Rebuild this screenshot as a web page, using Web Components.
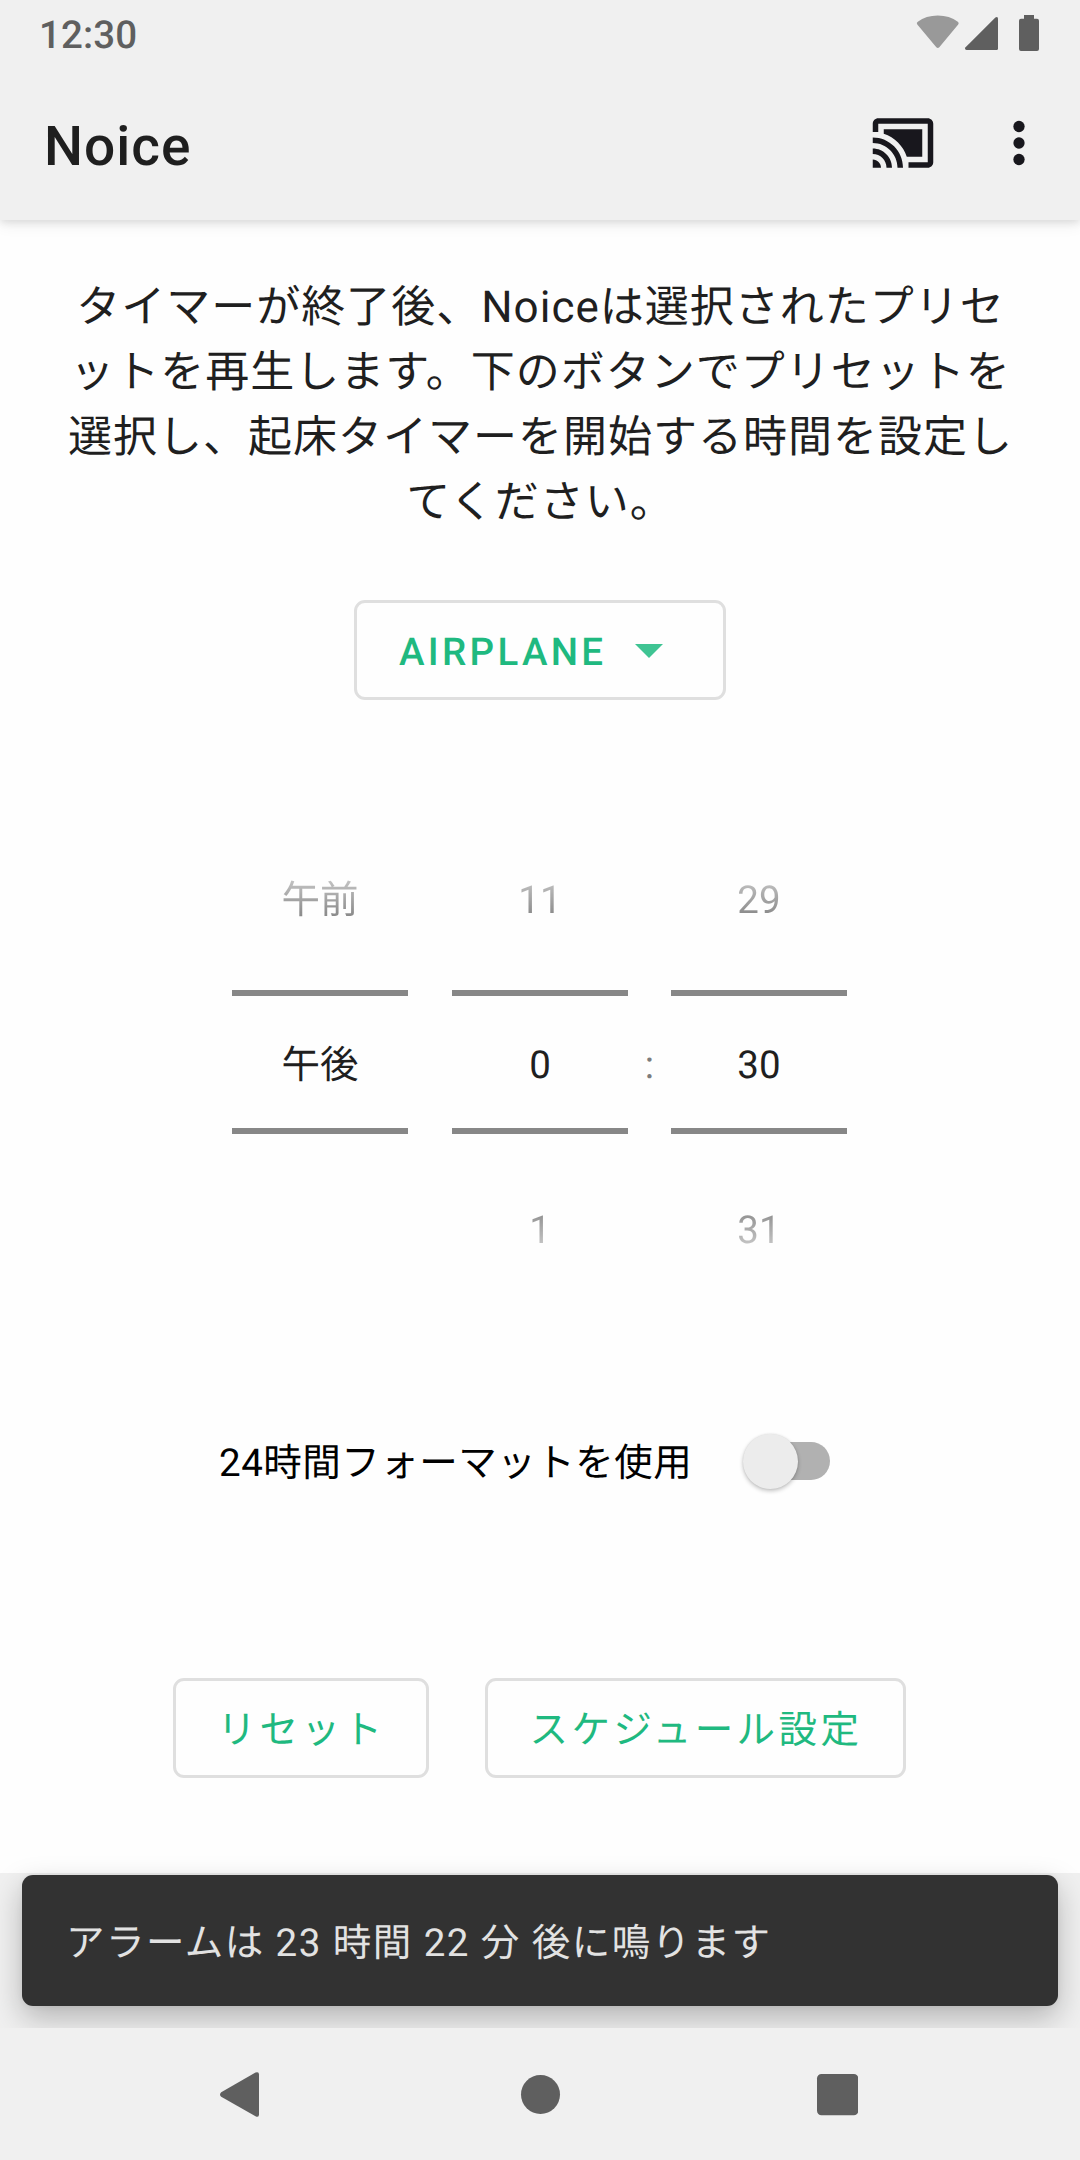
<!DOCTYPE html>
<html lang="ja">
<head>
<meta charset="utf-8">
<title>Noice</title>
<style>
html,body{margin:0;padding:0}
body{width:1080px;height:2160px;overflow:hidden;background:#fefefe;font-family:Roboto,"Noto Sans CJK JP",sans-serif;font-size:38.5px;color:#1f1f1f;text-rendering:geometricPrecision}
</style>
</head>
<body>
<noice-app></noice-app>
<script>
const define = (name, html) => {
  const t = document.createElement('template');
  t.innerHTML = html;
  customElements.define(name, class extends HTMLElement {
    constructor() {
      super();
      this.attachShadow({mode: 'open'}).appendChild(t.content.cloneNode(true));
    }
  });
};

define('status-bar', `
<style>
:host{display:flex;position:relative;z-index:1;height:66px;box-sizing:border-box;padding:0 41px 0 39px;justify-content:space-between;background:#f0f0f0;color:#5f5f5f}
time{font-weight:500;line-height:71px;letter-spacing:.1px}
svg{display:block;margin-top:12px}
</style>
<time>12:30</time>
<svg width="124" height="42" viewBox="915 12 124 42">
<path fill="#999" d="M917.3 24.6Q916 23 917.8 21.8Q926 15.4 937.8 15.4T957.800 21.800Q959.500 23 958.200 24.600L939.300 47.200Q937.800 48.800 936.300 47.200Z"/>
<path fill="#5f5f5f" d="M965.600 47.300L995.400 17.600Q998 16.200 998 18.800V48.500Q998 50 996.500 50H966.500Q964 49.500 965.600 47.300Z"/>
<path fill="#5f5f5f" d="M1024 15H1034V18.700H1037Q1039 18.700 1039 20.700V49Q1039 51 1037 51H1021Q1019 51 1019 49V20.700Q1019 18.700 1021 18.700H1024Z"/>
</svg>`);

define('app-bar', `
<style>
:host{display:flex;position:relative;height:154px;box-sizing:border-box;padding:44px 28px 44px 44px;background:#f0f0f0;box-shadow:0 2px 8px rgba(0,0,0,.11),0 6px 14px rgba(0,0,0,.06);color:#1f1f1f}
h1{margin:0;flex:1;font-size:55px;font-weight:500;line-height:74px;letter-spacing:1px}
svg{display:block;width:66px;height:66px;fill:#18171d}
svg+svg{margin-left:50px}
</style>
<h1><slot></slot></h1>
<svg viewBox="0 0 24 24"><path d="M1 18v3h3c0-1.660-1.340-3-3-3zm0-4v2c2.760 0 5 2.240 5 5h2c0-3.870-3.130-7-7-7zm18-7H5v1.630c3.960 1.280 7.090 4.410 8.370 8.370H19V7zM1 10v2c4.970 0 9 4.030 9 9h2c0-6.080-4.930-11-11-11zm20-7H3c-1.100 0-2 .9-2 2v3h2V5h18v14h-7v2h7c1.100 0 2-.9 2-2V5c0-1.100-.9-2-2-2z"/></svg>
<svg viewBox="0 0 24 24"><circle cx="12" cy="6" r="2.050"/><circle cx="12" cy="12" r="2.050"/><circle cx="12" cy="18" r="2.050"/></svg>`);

define('outlined-button', `
<style>
:host{display:inline-flex;align-items:center;justify-content:center;height:100px;box-sizing:border-box;border:3px solid #dfdfdf;border-radius:11px;color:#1fb980;letter-spacing:3.44px;white-space:nowrap}
</style><slot></slot>`);

define('preset-picker', `
<style>
:host{display:flex;justify-content:center}
outlined-button{width:372px;justify-content:flex-start;padding-left:42px;font-weight:500;letter-spacing:3.3px}
span{line-height:94px;padding-top:5px}
svg{display:block;margin-left:29px;margin-top:2px}
</style>
<outlined-button><span><slot></slot></span><svg width="28" height="14" viewBox="0 0 28 14"><path fill="#3fc493" d="M0 0H28L14 14Z"/></svg></outlined-button>`);

define('number-wheel', `
<style>
:host{display:flex;flex-direction:column;width:176px;text-align:center}
.prev{height:180px;line-height:182px;-webkit-mask-image:linear-gradient(transparent 33px,#000 173px);mask-image:linear-gradient(transparent 33px,#000 173px)}
.cur{box-sizing:border-box;height:144px;border:solid #878787;border-width:6px 0;padding-top:6px;line-height:128px}
.next{height:192px;line-height:194px;-webkit-mask-image:linear-gradient(#000 7px,transparent 147px);mask-image:linear-gradient(#000 7px,transparent 147px)}
</style>
<div class="prev"><slot name="prev"></slot></div>
<div class="cur"><slot></slot></div>
<div class="next"><slot name="next"></slot></div>`);

define('time-picker', `
<style>
:host{display:flex;padding-left:232px}
.colon{width:43px;text-align:center;padding-top:180px;line-height:151px;color:#7c7c7c}
.first{margin-right:44px}
</style>
<number-wheel class="first"><span slot="prev">午前</span>午後</number-wheel>
<number-wheel><span slot="prev">11</span>0<span slot="next">1</span></number-wheel>
<div class="colon">:</div>
<number-wheel><span slot="prev">29</span>30<span slot="next">31</span></number-wheel>`);

define('toggle-row', `
<style>
:host{display:flex;align-items:center;height:76px;padding-left:219px;color:#000}
.label{width:523px;padding-top:6px;line-height:74px;letter-spacing:.5px}
.track{width:80px;height:38px;margin-left:8px;border-radius:19px;background:#b1b1b1;display:flex;align-items:center}
.thumb{width:55px;height:55px;margin-left:-7px;margin-top:0;border-radius:50%;background:#ececec;box-shadow:0 2px 4px rgba(0,0,0,.24),0 0 2px rgba(0,0,0,.1);flex:none}
</style>
<div class="label"><slot></slot></div><div class="track"><div class="thumb"></div></div>`);

define('snack-bar', `
<style>
:host{display:block;height:155px;box-sizing:border-box;padding:2px 22px 22px;background:#f0f0f0}
div{height:131px;box-sizing:border-box;padding-left:44px;padding-top:4px;line-height:129px;border-radius:11px;background:#323232;color:#e2e2e2;letter-spacing:1.45px;box-shadow:0 12px 30px rgba(0,0,0,.25),0 0 6px rgba(0,0,0,.05)}
</style><div><slot></slot></div>`);

define('nav-bar', `
<style>
:host{display:flex;position:relative;height:132px;box-sizing:border-box;background:#f0f0f0;padding:44px 0 0 220px;align-items:flex-start}
svg{display:block}
</style>
<svg width="638" height="46" viewBox="220 2072 638 46" fill="#5f5f5f">
<path d="M221.200 2092.200L255.500 2072.600Q259 2071.200 259 2074.500V2114.500Q259 2118 255.500 2116.300L221.200 2096.800Q218.800 2094.500 221.200 2092.200Z"/>
<circle cx="540.500" cy="2094.500" r="19.500"/><rect x="817" y="2074" width="41.300" height="41.300" rx="4.500"/>
</svg>`);

define('noice-app', `
<style>
:host{display:flex;flex-direction:column;height:2160px}
main{height:1598px;padding-top:55px;display:flex;flex-direction:column}
p{margin:0 0 65px;font-size:44px;line-height:65px;letter-spacing:1px;text-align:center;white-space:nowrap}
p span{display:block;padding-left:1px}
preset-picker{margin-bottom:110px}
time-picker{margin-bottom:97px}
toggle-row{margin-bottom:179px}
.actions{display:flex;gap:56px;padding-left:173px}
.actions outlined-button{box-sizing:border-box;padding-left:1px;padding-bottom:2px}
.reset{width:256px}.schedule{width:421px}
</style>
<status-bar></status-bar>
<app-bar>Noice</app-bar>
<main>
<p><span>タイマーが終了後、Noiceは選択されたプリセ</span><span>ットを再生します。下のボタンでプリセットを</span><span>選択し、起床タイマーを開始する時間を設定し</span><span>てください。</span></p>
<preset-picker>AIRPLANE</preset-picker>
<time-picker></time-picker>
<toggle-row>24時間フォーマットを使用</toggle-row>
<div class="actions"><outlined-button class="reset">リセット</outlined-button><outlined-button class="schedule">スケジュール設定</outlined-button></div>
</main>
<snack-bar>アラームは 23 時間 22 分 後に鳴ります</snack-bar>
<nav-bar></nav-bar>`);
</script>
</body>
</html>
